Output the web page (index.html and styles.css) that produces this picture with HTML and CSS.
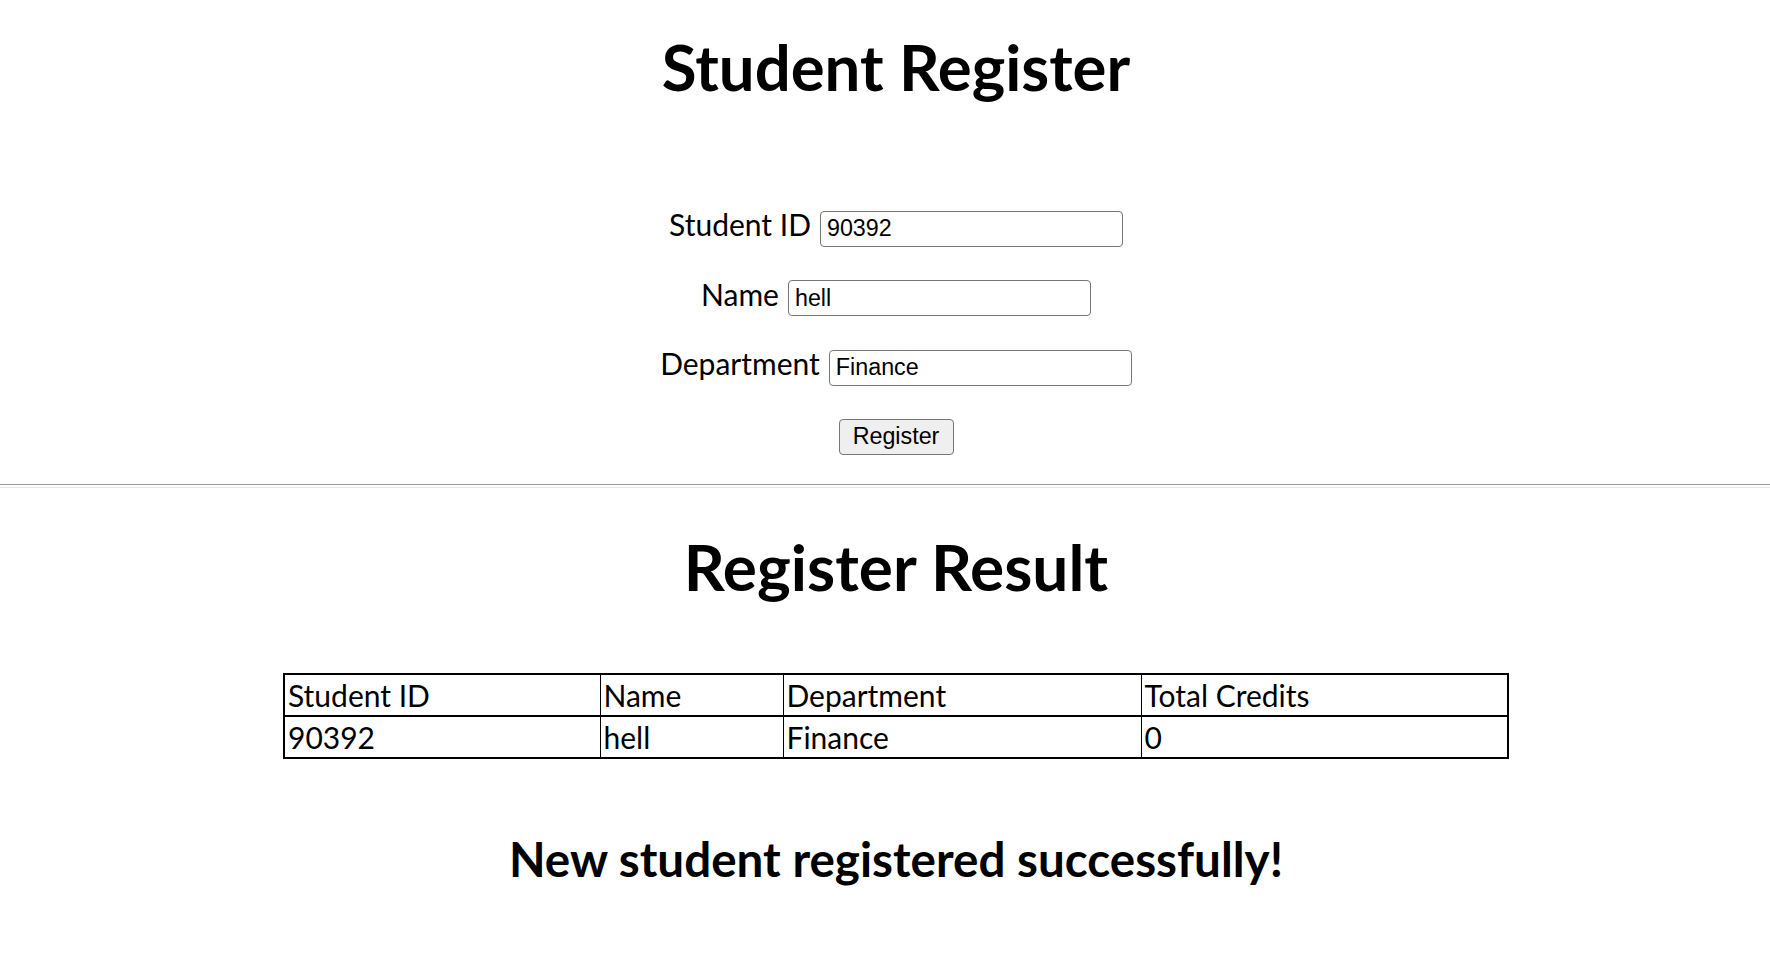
FILE: index.html
```html
<!DOCTYPE html>
<html lang="en">
<head>
<meta charset="utf-8">
<title>Student Register</title>
<link rel="stylesheet" href="styles.css">
</head>
<body>
<section class="section">
  <h1 class="title">Student Register</h1>
  <form class="form">
    <div class="row">
      <label class="label" for="sid">Student ID</label>
      <input class="field" id="sid" type="text" value="90392">
    </div>
    <div class="row">
      <label class="label" for="sname">Name</label>
      <input class="field" id="sname" type="text" value="hell">
    </div>
    <div class="row">
      <label class="label" for="dept">Department</label>
      <input class="field" id="dept" type="text" value="Finance">
    </div>
    <div class="row row-action">
      <button class="btn" type="button">Register</button>
    </div>
  </form>
</section>
<hr class="divider">
<section class="section">
  <h2 class="result-title">Register Result</h2>
  <table class="result">
    <colgroup>
      <col class="c1"><col class="c2"><col class="c3"><col class="c4">
    </colgroup>
    <thead>
      <tr><th>Student ID</th><th>Name</th><th>Department</th><th>Total Credits</th></tr>
    </thead>
    <tbody>
      <tr><td>90392</td><td>hell</td><td>Finance</td><td>0</td></tr>
    </tbody>
  </table>
  <h2 class="message">New student registered successfully!</h2>
</section>
</body>
</html>
```
FILE: styles.css
```css
html, body {
  margin: 0;
  padding: 0;
  background: #ffffff;
  color: #000000;
  font-family: "Lato", "Open Sans", sans-serif;
}

.section {
  padding-left: 22px;
}

.title {
  margin: 29px 0 0;
  font-size: 63.5px;
  line-height: 1.2;
  font-weight: 700;
  text-align: center;
}

.form {
  margin: 104px 0 0;
  display: flex;
  flex-direction: column;
  gap: 32px;
}

.row {
  display: flex;
  justify-content: center;
  align-items: baseline;
  gap: 9px;
}

.row-action {
  margin-top: 1px;
}

.label {
  font-size: 30px;
  line-height: 30px;
}

.field {
  box-sizing: border-box;
  width: 303px;
  height: 36px;
  margin: 0;
  padding: 0 6px;
  border: 1px solid #767676;
  border-radius: 4px;
  font-family: "Liberation Sans", Arial, sans-serif;
  font-size: 23.3px;
  color: #000;
  background: #fff;
}

.btn {
  box-sizing: border-box;
  width: 115px;
  height: 36px;
  margin: 0;
  padding: 0;
  border: 1px solid #767676;
  border-radius: 4px;
  background: #efefef;
  font-family: "Liberation Sans", Arial, sans-serif;
  font-size: 23.3px;
  color: #000;
}

.divider {
  margin: 29px 0 0;
  height: 2px;
  border: 0;
  border-top: 1px solid #9a9a9a;
  border-bottom: 1px solid #e8e8e8;
}

.result-title {
  margin: 41px 0 0;
  font-size: 64px;
  line-height: 1.2;
  font-weight: 700;
  text-align: center;
}

.result {
  margin: 68px auto 0;
  width: 1224px;
  table-layout: fixed;
  border-collapse: collapse;
  border: 2px solid #000;
}

.c1 { width: 316px; }
.c2 { width: 183px; }
.c3 { width: 358px; }
.c4 { width: 367px; }

.result th,
.result td {
  padding: 0 3px;
  border: 1px solid #000;
  font-size: 30px;
  line-height: 40px;
  font-weight: 400;
  text-align: left;
  white-space: nowrap;
}

.result thead th {
  border-bottom: 2px solid #000;
}

.message {
  margin: 71px 0 0;
  font-size: 47.6px;
  line-height: 1.2;
  font-weight: 700;
  text-align: center;
}
```
